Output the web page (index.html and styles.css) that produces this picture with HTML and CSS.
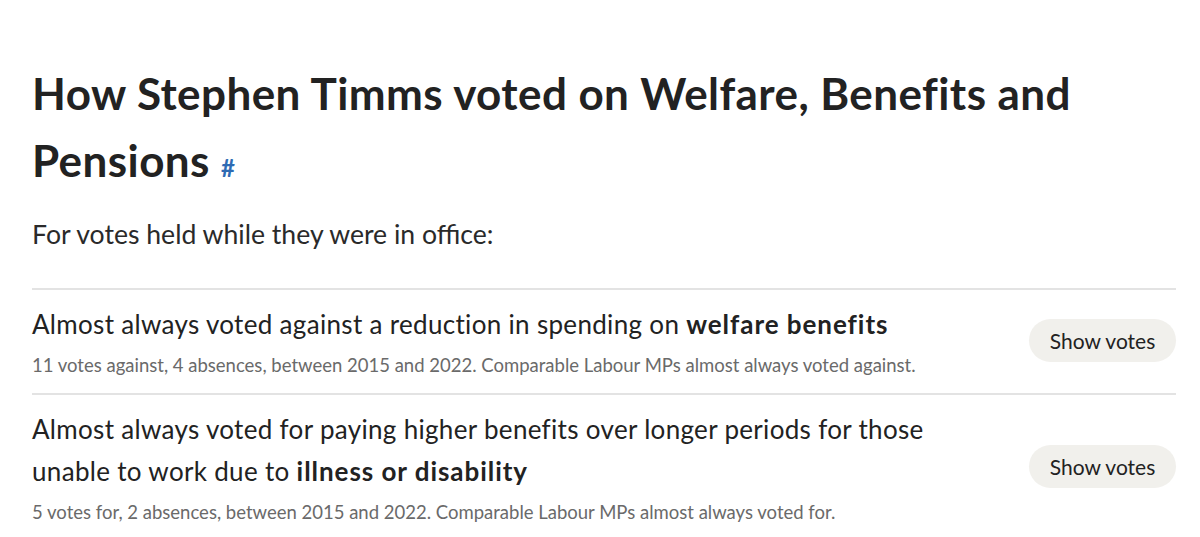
FILE: index.html
```html
<!DOCTYPE html>
<html lang="en">
<head>
<meta charset="utf-8">
<title>How Stephen Timms voted on Welfare, Benefits and Pensions</title>
<link rel="stylesheet" href="styles.css">
</head>
<body>
<main class="page">
  <h2 class="heading">How Stephen Timms voted on Welfare, Benefits and Pensions <a class="anchor" href="#welfare">#</a></h2>
  <p class="intro">For votes held while they were in office:</p>
  <ul class="policies">
    <li class="policy">
      <div class="policy-text">
        <p class="policy-title">Almost always voted against a reduction in spending on <strong>welfare benefits</strong></p>
        <p class="policy-sub">11 votes against, 4 absences, between 2015 and 2022. Comparable Labour MPs almost always voted against.</p>
      </div>
      <button class="btn">Show votes</button>
    </li>
    <li class="policy">
      <div class="policy-text">
        <p class="policy-title">Almost always voted for paying higher benefits over longer periods for those unable to work due to <strong>illness or disability</strong></p>
        <p class="policy-sub">5 votes for, 2 absences, between 2015 and 2022. Comparable Labour MPs almost always voted for.</p>
      </div>
      <button class="btn">Show votes</button>
    </li>
  </ul>
</main>
</body>
</html>
```
FILE: styles.css
```css
html, body {
  margin: 0;
  padding: 0;
  background: #ffffff;
}
body {
  font-family: Lato, "Open Sans", sans-serif;
  color: #222222;
}
.page {
  padding: 60px 24px 0 32px;
}
.heading {
  margin: 0;
  font-size: 44px;
  line-height: 67px;
  letter-spacing: 0.42px;
  font-weight: 700;
  color: #222222;
  width: 1080px;
}
.anchor {
  font-size: 24px;
  line-height: 1;
  letter-spacing: 0;
  color: #2f6bb3;
  text-decoration: none;
  font-weight: 700;
}
.intro {
  margin: 22px 0 0;
  font-size: 26.6px;
  line-height: 36px;
  color: #2a2a2a;
}
.policies {
  list-style: none;
  margin: 36px 0 0;
  padding: 0;
  border-top: 2px solid #e3e3e3;
}
.policy {
  display: flex;
  align-items: center;
  gap: 24px;
  border-bottom: 2px solid #e3e3e3;
  padding: 13px 0 15px;
}
.policy-text {
  flex: 1;
  max-width: 940px;
}
.policy-title {
  margin: 0;
  font-size: 26px;
  line-height: 42px;
  letter-spacing: 0.32px;
  color: #222222;
}
.policy-title strong {
  font-weight: 700;
  letter-spacing: 0.95px;
}
.policy-sub {
  margin: 7px 0 0;
  font-size: 18.5px;
  line-height: 26px;
  color: #6a6a6a;
}
.btn {
  margin-left: auto;
  font-family: inherit;
  font-size: 21px;
  color: #222222;
  background: #f1f0ec;
  border: none;
  border-radius: 22px;
  height: 43px;
  width: 147px;
  padding: 0;
  flex: none;
}
```
